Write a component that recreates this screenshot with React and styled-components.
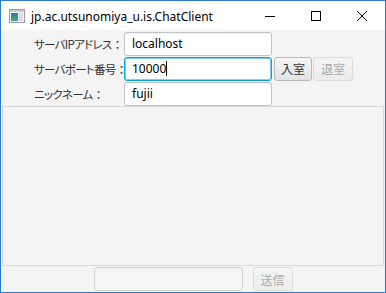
import React from 'react'
import styled, { createGlobalStyle } from 'styled-components'

const GlobalStyle = createGlobalStyle`
  html, body { margin: 0; padding: 0; background: #ffffff; }
  * { box-sizing: border-box; }
`

const Window = styled.div`
  width: 386px;
  height: 293px;
  border: 1px solid #2b79d0;
  display: flex;
  flex-direction: column;
  background: #f4f4f4;
  font-family: "Noto Sans", "Noto Sans CJK JP", sans-serif;
`

const TitleBar = styled.div`
  height: 29px;
  background: #ffffff;
  display: flex;
  align-items: center;
`

const AppIcon = styled.svg`
  margin-left: 8px;
  margin-right: 6px;
`

const Title = styled.div`
  flex: 1;
  font-size: 12px;
  color: #000;
  padding-top: 1px;
`

const CtrlButton = styled.div`
  width: 46px;
  height: 29px;
  display: flex;
  align-items: center;
  justify-content: center;
`

const Form = styled.div`
  display: grid;
  grid-template-columns: 90px 148px auto;
  grid-auto-rows: 25px;
  padding: 1px 0 0 33px;
  align-items: center;
`

const Label = styled.div`
  font-family: "Noto Sans CJK JP", sans-serif;
  font-feature-settings: "palt";
  font-size: 11.5px;
  letter-spacing: -0.7px;
  white-space: nowrap;
  color: #333;
  grid-column: 1;
`

const Colon = styled.span`
  margin-left: 3px;
`

const Field = styled.div`
  height: 24px;
  border: 1px solid ${p => (p.$focused ? '#0a9fd8' : '#c2c2c2')};
  border-radius: 3px;
  background: ${p => (p.$disabled ? '#f8f8f8' : '#ffffff')};
  box-shadow: ${p => (p.$focused ? '0 0 0 1px #7fd0ef inset' : 'inset 0 1px 1px rgba(0,0,0,0.06)')};
  opacity: ${p => (p.$disabled ? 0.6 : 1)};
  font-size: 12px;
  color: #000;
  display: flex;
  align-items: center;
  padding-left: 7px;
  width: ${p => (p.$w ? p.$w + 'px' : 'auto')};
`

const Caret = styled.span`
  display: inline-block;
  width: 1px;
  height: 15px;
  background: #000;
`

const Buttons = styled.div`
  display: flex;
  gap: 1px;
  padding-left: 2px;
`

const Button = styled.div`
  height: 24px;
  width: ${p => p.$w}px;
  border: 1px solid #b9b9b9;
  border-radius: 3px;
  background: linear-gradient(#f6f6f6, #e2e2e2);
  font-family: "Noto Sans CJK JP", sans-serif;
  font-size: 12px;
  color: #333;
  display: flex;
  align-items: center;
  justify-content: center;
  opacity: ${p => (p.$disabled ? 0.4 : 1)};
`

const LogArea = styled.div`
  height: 160px;
  margin: 0 1px;
  border: 1px solid #d8d8d8;
  background: #f4f4f4;
`

const BottomBar = styled.div`
  flex: 1;
  display: flex;
  justify-content: center;
  gap: 10px;
  padding-top: 1px;
`

export default function App() {
  return (
    <>
      <GlobalStyle />
      <Window>
        <TitleBar>
          <AppIcon width="16" height="14" viewBox="0 0 16 14">
            <defs>
              <linearGradient id="g" x1="0" y1="0" x2="0" y2="1">
                <stop offset="0" stopColor="#3d6fb5" />
                <stop offset="1" stopColor="#3fae74" />
              </linearGradient>
            </defs>
            <rect x="0.5" y="0.5" width="15" height="13" fill="#f4f4f4" stroke="#9b9b9b" />
            <rect x="1" y="1" width="14" height="2" fill="#c9c9c9" />
            <rect x="2" y="4" width="7" height="8" fill="url(#g)" />
            <rect x="10" y="4" width="4" height="8" fill="#dcdcdc" />
          </AppIcon>
          <Title>jp.ac.utsunomiya_u.is.ChatClient</Title>
          <CtrlButton>
            <svg width="10" height="10" viewBox="0 0 10 10"><line x1="0" y1="5.5" x2="10" y2="5.5" stroke="#000" strokeWidth="1" /></svg>
          </CtrlButton>
          <CtrlButton>
            <svg width="10" height="10" viewBox="0 0 10 10"><rect x="0.5" y="0.5" width="9" height="9" fill="none" stroke="#000" strokeWidth="1" /></svg>
          </CtrlButton>
          <CtrlButton>
            <svg width="10" height="10" viewBox="0 0 10 10"><path d="M0 0L10 10M10 0L0 10" stroke="#000" strokeWidth="1" /></svg>
          </CtrlButton>
        </TitleBar>
        <Form>
          <Label>サーバIPアドレス<Colon>：</Colon></Label>
          <Field>localhost</Field>
          <div />
          <Label>サーバポート番号<Colon>：</Colon></Label>
          <Field $focused>10000<Caret /></Field>
          <Buttons>
            <Button $w={38}>入室</Button>
            <Button $w={40} $disabled>退室</Button>
          </Buttons>
          <Label>ニックネーム<Colon>：</Colon></Label>
          <Field>fujii</Field>
          <div />
        </Form>
        <LogArea />
        <BottomBar>
          <Field $w={149} $disabled />
          <Button $w={40} $disabled>送信</Button>
        </BottomBar>
      </Window>
    </>
  )
}
